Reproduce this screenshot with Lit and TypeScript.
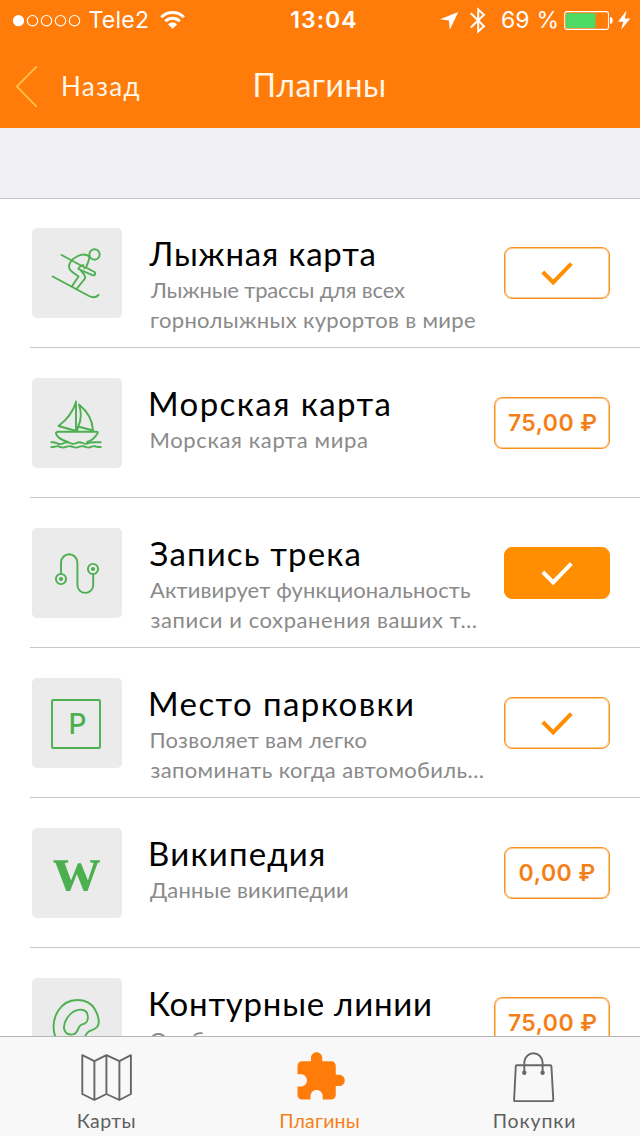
import { LitElement, html, svg, css, TemplateResult } from "lit";
import { customElement, property } from "lit/decorators.js";
import { styleMap } from "lit/directives/style-map.js";

const pen = document.createElement("canvas").getContext("2d")!;

/** One line of text tracked so that its ink spans exactly `width` pixels, starting `inset` pixels in. */
@customElement("tracked-line")
class TrackedLine extends LitElement {
  @property() text = "";
  @property() font = "400 22px Lato";
  @property({ type: Number }) width = 0;
  @property({ type: Number }) inset = 0;

  static styles = css`
    :host { display: block; white-space: pre; }
    .ink { display: block; }
  `;

  render() {
    pen.font = this.font;
    const m = pen.measureText(this.text);
    const gaps = Math.max(1, this.text.length - 1);
    const spacing = this.width ? (this.width - (m.actualBoundingBoxRight + m.actualBoundingBoxLeft)) / gaps : 0;
    return html`<span class="ink" style=${styleMap({
      font: this.font,
      lineHeight: "inherit",
      letterSpacing: `${spacing.toFixed(3)}px`,
      marginLeft: `${(this.inset + m.actualBoundingBoxLeft).toFixed(2)}px`,
      marginRight: `${(-spacing).toFixed(3)}px`,
    })}>${this.text}</span>`;
  }
}

const line = (text: string, font: string, width: number, inset = 0) =>
  html`<tracked-line .text=${text} .font=${font} .width=${width} .inset=${inset}></tracked-line>`;

const TITLE = "400 33px Lato, sans-serif";
const DESC = "400 22px Lato, sans-serif";
const TAB = "400 19.5px Lato, sans-serif";
const PRICE = "600 23px Inter, sans-serif";

const skier = svg`
  <circle cx="62.5" cy="26.5" r="5.2"/>
  <path d="M29.5 27 50 38M20.7 48.5 57 68C61 70 64 69.500 66.500 67"/>
  <path d="M57.300 28.500C54.500 26.300 50 26 46 28C41 30.500 37.500 34 37 38C36.700 42 39.500 43.500 46.500 48.500L39.800 58.500M44.500 61 53 50.500C54 48.500 52.500 46.500 49 42.500"/>
  <path d="M57.300 28.500C57.800 32 55.500 35 54 39.500L62.500 44C64 45.500 63 47.800 61 47.300L46.300 41C46.500 38.500 49 38.500 51 37L52.500 40.500"/>`;

const boat = svg`
  <path d="M44 23.500V53.500M44 24C41 34 34.500 42 26.500 48L44 53M47 26.500C55 33 60.500 42 61 52.500L46 48.500M47 26.500C49.500 34 49.500 42 46 49L45 53.500"/>
  <path d="M36 64C29.500 62 24.500 58.500 24 55.500C24 54 24.700 53.700 26 53.700H64.500C66 53.700 66 54.500 65.300 55.800C62.500 60.500 59 63 55 64"/>
  <path d="M19.300 64.300C22 64.300 23.500 64.300 25.300 65.300S30 66.200 32 65S36 64 38 65S42.500 66.200 44.500 65S48.500 64 50.500 65S55 66.200 57 65S62 64.300 68.700 64.300"/>
  <path d="M19.300 69C22 69.500 24 67.800 26 68.200S30 70 32 69.500S36 67.800 38.500 68.200S42 70 44.500 69.500S48.500 67.800 51 68.200S55 70 57 69.500S61 67.800 63 68.200S66 69.200 68.700 69"/>`;

const track = svg`
  <circle cx="29" cy="51" r="5.1"/><circle cx="61" cy="41" r="5.1"/>
  <circle class="dot" cx="29" cy="51" r="2.1"/><circle class="dot" cx="61" cy="41" r="2.100"/>
  <path d="M29 46V34.500A8.200 8.200 0 0 1 45.400 34.500V57A7.900 7.900 0 0 0 61.200 57V46"/>`;

const parking = svg`
  <rect x="20" y="22" width="48" height="48" rx="1"/>
  <text class="p" x="36.500" y="55.700" textLength="17">P</text>`;

const wiki = svg`<text class="w" x="44.700" y="62" text-anchor="middle">w</text>`;

const contour = svg`
  <path d="M25 62C20.500 54 20 43 26 33C31 25 37 22 45 22C54 22 60 26 63 31.500C65.500 36 67 41 66.700 45C66.300 51 60 52 57 53.300C54.500 54.500 53.500 57 52 61"/>
  <path d="M32 50C31.500 43 37.500 36 42 33.300C47 30.800 53 31 55 35C56.500 39 56 43.500 53 45.300C50 46.800 48.500 46 46.800 49.500C45.500 52.500 45 55 42 56.200C37 57.500 32.500 55.500 32 50Z"/>`;

type Action = "on" | "off" | { label: string; ink: number };
interface Plugin {
  icon: TemplateResult<2>;
  title: [string, number, number];
  desc: [string, number, number][];
  action: Action;
}

const PLUGINS: Plugin[] = [
  { icon: skier, title: ["Лыжная карта", 226, 0.5], action: "off",
    desc: [["Лыжные трассы для всех", 255, 2], ["горнолыжных курортов в мире", 324, 3]] },
  { icon: boat, title: ["Морская карта", 238.5, 3], action: { label: "75,00 ₽", ink: 88.5 },
    desc: [["Морская карта мира", 215.5, 3.5]] },
  { icon: track, title: ["Запись трека", 210, 1.5], action: "on",
    desc: [["Активирует функциональность", 320, 2], ["записи и сохранения ваших т…", 326, 2.5]] },
  { icon: parking, title: ["Место парковки", 261, 3], action: "off",
    desc: [["Позволяет вам легко", 215, 3.5], ["запоминать когда автомобиль…", 333, 2.5]] },
  { icon: wiki, title: ["Википедия", 172, 3], action: { label: "0,00 ₽", ink: 75 },
    desc: [["Данные википедии", 198, 2]] },
  { icon: contour, title: ["Контурные линии", 279, 3], action: { label: "75,00 ₽", ink: 88.5 },
    desc: [["Отображает контурные линии", 320, 2.5]] },
];

@customElement("plugin-row")
class PluginRow extends LitElement {
  @property({ attribute: false }) plugin!: Plugin;

  static styles = css`
    :host { display: block; flex: none; padding-left: 30px; }
    .row { display: flex; align-items: flex-start; box-sizing: border-box; height: 150px; padding-left: 2px; padding-right: 30px; border-bottom: 1px solid #c8c7cc; }
    .tile { flex: none; width: 90px; height: 90px; margin-top: 30px; border-radius: 5px; background: #ebebeb; }
    .tile svg { display: block; fill: none; stroke: #4caf50; stroke-width: 1.9; stroke-linecap: round; stroke-linejoin: round; }
    .tile .dot, .tile .p, .tile .w { fill: #4caf50; stroke: none; }
    .p { font: 500 28px Inter, sans-serif; }
    .w { font: bold 65px "Liberation Serif", serif; }
    .texts { flex: 1; min-width: 0; margin: 35px 0 0 26px; }
    .title { color: #000; line-height: 40px; margin-bottom: 2px; }
    .desc { color: #8a8a8a; line-height: 30px; }
    .action { flex: none; display: flex; align-items: center; justify-content: center; box-sizing: border-box; width: 106px; height: 52px; margin-top: 49px; border: 1px solid #f9931e; box-shadow: inset 0 0 0 1px rgba(249, 147, 30, 0.5); border-radius: 8px; line-height: 50px; color: #f57f17; }
    .price { width: 116px; }
    .short { width: 106px; }
    .on { background: #ff8f00; border-color: #ff8f00; box-shadow: none; }
    .action svg { display: block; fill: none; stroke: #ff8f00; stroke-width: 4; }
    .on svg { stroke: #fff; }
  `;

  private button(a: Action) {
    if (typeof a === "string") {
      return html`<div class="action ${a}"><svg width="34" height="26" viewBox="0 0 34 26"><path d="M2.800 12 13.200 22.300 31.300 3.700"/></svg></div>`;
    }
    return html`<div class="action ${a.ink > 80 ? "price" : "short"}">${line(a.label, PRICE, a.ink, 1)}</div>`;
  }

  render() {
    const p = this.plugin;
    return html`<div class="row">
      <div class="tile"><svg width="90" height="90" viewBox="0 0 90 90">${p.icon}</svg></div>
      <div class="texts">
        <div class="title">${line(p.title[0], TITLE, p.title[1], p.title[2])}</div>
        <div class="desc">${p.desc.map((d) => line(d[0], DESC, d[1], d[2]))}</div>
      </div>
      ${this.button(p.action)}
    </div>`;
  }
}

@customElement("status-bar")
class StatusBar extends LitElement {
  static styles = css`
    :host { display: grid; grid-template-columns: 1fr auto 1fr; height: 40px; padding: 0 9px 0 12px; color: #fff; line-height: 41px; }
    .side { display: flex; align-items: flex-start; }
    .end { justify-content: flex-end; }
    svg { display: block; flex: none; fill: #fff; }
    .ring { fill: none; stroke: #fff; stroke-width: 1.1; }
    .stroke { fill: none; stroke: #fff; stroke-width: 2; }
    .arc { fill: none; stroke: #fff; stroke-width: 3; }
    .charge { fill: #4cd964; }
    .dots { margin-right: 8.5px; }
    .wifi { margin-left: 10.5px; }
    .clock { margin-left: 5px; }
    .bt { margin: 0 15px 0 11px; }
    .battery { margin: 0 4px 0 5px; }
  `;
  render() {
    return html`
      <div class="side">
        <svg class="dots" width="69" height="40" viewBox="12 0 69 40">
          <circle cx="18.500" cy="20.700" r="5.600"/>
          ${[32.5, 46.5, 60.5, 74.5].map((x) => svg`<circle class="ring" cx=${x} cy="20.700" r="5.200"/>`)}
        </svg>
        ${line("Tele2", "400 23px Inter, sans-serif", 58.5)}
        <svg class="wifi" width="26" height="40" viewBox="160 0 26 40">
          <path class="arc" d="M161.300 17.300C167.500 10.900 177.700 10.900 183.900 17.300"/>
          <path class="arc" d="M165.300 21.300C169.300 17.300 175.900 17.300 179.900 21.300"/>
          <path d="M168 24.200C170.500 21.800 174.700 21.800 177.200 24.200L172.600 28.700Z"/>
        </svg>
      </div>
      <div class="clock">${line("13:04", "600 23px Inter, sans-serif", 65)}</div>
      <div class="side end">
        <svg width="19" height="40" viewBox="442 0 19 40"><path d="M460.300 12 451.800 29.700 450.800 20.400 442 19.300Z"/></svg>
        <svg class="bt" width="16" height="40" viewBox="472 0 16 40"><path class="stroke" d="M472.800 13.300 486 26.200 480.200 31.500V9.500L486 14.700 472.800 27.500"/></svg>
        ${line("69 %", "400 23px Inter, sans-serif", 54.5, 0.5)}
        <svg class="battery" width="50" height="40" viewBox="564 0 50 40">
          <rect class="ring" x="564.700" y="11.600" width="43.800" height="17.800" rx="2.500"/>
          <rect class="charge" x="566" y="13.200" width="29.500" height="14.800" rx="1"/>
          <path d="M610 17C613.700 17 613.700 24 610 24Z"/>
        </svg>
        <svg width="13" height="40" viewBox="618 0 13 40"><path d="M626.500 10.500 618 21.800H623.300L621 29.700 630.300 18.500H624.800Z"/></svg>
      </div>`;
  }
}

@customElement("app-root")
class AppRoot extends LitElement {
  static styles = css`
    :host { display: flex; flex-direction: column; height: 1136px; overflow: hidden; background: #fff; font-family: Lato, sans-serif; }
    .top { flex: none; height: 128px; background: #ff7b0a; color: #fff; }
    .nav { display: grid; grid-template-columns: 1fr auto 1fr; height: 88px; line-height: 40px; }
    .back { display: flex; padding-left: 14px; color: #fff6e8; }
    .back svg { display: block; margin: 24px 23px 0 0; fill: none; stroke: #ffc14d; stroke-width: 1.8; }
    .label { padding-top: 26px; }
    .heading { padding-top: 25px; color: #fff6e8; }
    .gap { flex: none; box-sizing: border-box; height: 71px; margin-bottom: -1px; background: #efeff4; border-bottom: 1px solid #c8c7cc; }
    .list { flex: 1; min-height: 0; overflow: hidden; display: flex; flex-direction: column; }
    .tabs { flex: none; box-sizing: border-box; height: 100px; display: grid; grid-template-columns: repeat(3, 1fr); background: #f8f8f8; border-top: 1px solid #b5b5b5; color: #5f5f5f; line-height: 26px; }
    .tab { display: flex; flex-direction: column; align-items: center; }
    .tab svg { display: block; margin: 11px 0 6px; fill: none; stroke: #666; stroke-width: 1.9; stroke-linejoin: round; }
    .active { color: #f57f17; }
    .tab.active svg { margin: 13px 0 4px; fill: #ff7b0a; stroke: none; }
    .tab .knob { fill: #666; stroke: none; }
  `;

  private tab(icon: TemplateResult<2>, label: string, width: number, inset = 0, active = false) {
    return html`<div class="tab ${active ? "active" : ""}">
      <svg width="54" height="54" viewBox="0 0 54 54">${icon}</svg>${line(label, TAB, width, inset)}
    </div>`;
  }

  render() {
    return html`
      <div class="top">
        <status-bar></status-bar>
        <div class="nav">
          <div class="back">
            <svg width="24" height="44" viewBox="0 0 24 44"><path d="M22.800 2.300 2.800 22.500 22.800 42.800"/></svg>
            <div class="label">${line("Назад", "400 26px Lato, sans-serif", 76.5, 2)}</div>
          </div>
          <div class="heading">${line("Плагины", "400 32px Lato, sans-serif", 129.5, 0.5)}</div>
        </div>
      </div>
      <div class="gap"></div>
      <div class="list">${PLUGINS.map((p) => html`<plugin-row .plugin=${p}></plugin-row>`)}</div>
      <div class="tabs">
        ${this.tab(svg`<path d="M2.300 7.200 14.400 13.200 26.400 7.200 39.400 13.200 50.900 7.200V46L39.400 52 26.400 46 14.400 52 2.300 46ZM14.400 13.200V52M26.400 7.200V46M39.400 13.200V52"/>`, "Карты", 57)}
        ${this.tab(svg`<path transform="scale(2.250)" d="M20.500 11H19V7c0-1.100-.9-2-2-2h-4V3.500C13 2.120 11.880 1 10.500 1S8 2.120 8 3.500V5H4c-1.100 0-1.990.9-1.990 2v3.800H3.500c1.490 0 2.700 1.210 2.700 2.700s-1.210 2.700-2.700 2.700H2V20c0 1.100.9 2 2 2h3.800v-1.500c0-1.490 1.210-2.700 2.700-2.700s2.700 1.210 2.700 2.700V22H17c1.100 0 2-.9 2-2v-4h1.500c1.380 0 2.500-1.120 2.500-2.500S21.880 11 20.500 11z"/>`, "Плагины", 78.5, 0, true)}
        ${this.tab(svg`<path d="M10.800 17.300H44.300Q45.300 17.300 45.400 18.300L47.300 52Q47.300 53.200 46.200 53.200H9.200Q8 53.200 8.100 52L9.800 18.300Q9.900 17.300 10.800 17.300ZM18.300 24V14A9.200 9.800 0 0 1 36.600 14V24"/><circle class="knob" cx="18.300" cy="24.800" r="2.200"/><circle class="knob" cx="36.600" cy="24.800" r="2.200"/>`, "Покупки", 80.5, 2.5)}
      </div>`;
  }
}
